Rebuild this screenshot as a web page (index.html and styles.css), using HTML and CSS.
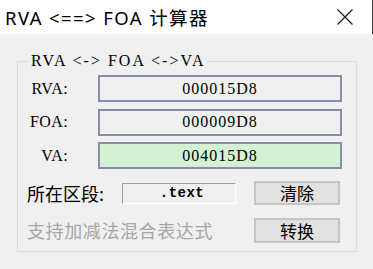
FILE: index.html
```html
<!DOCTYPE html>
<html>
<head>
<meta charset="utf-8">
<link rel="stylesheet" href="styles.css">
</head>
<body>
<div class="window">
  <div class="titlebar">
    <span class="title">RVA &lt;==&gt; FOA 计算器</span>
    <svg class="close" width="16" height="16" viewBox="0 0 16 16">
      <path d="M0.5 0.5 L15.5 15.5 M15.5 0.5 L0.5 15.5" stroke="#1a1a1a" stroke-width="1.2" fill="none"/>
    </svg>
  </div>
  <div class="content">
    <fieldset class="group">
      <legend class="legend">RVA &lt;-&gt; FOA &lt;-&gt;VA</legend>
      <div class="fields">
        <label class="lbl">RVA:</label>
        <div class="edit">000015D8</div>
        <label class="lbl">FOA:</label>
        <div class="edit">000009D8</div>
        <label class="lbl">VA:</label>
        <div class="edit edit-green">004015D8</div>
      </div>
      <div class="row row-section">
        <span class="cjk-label">所在区段:</span>
        <div class="section-box">.text</div>
        <span class="spacer"></span>
        <button class="btn">清除</button>
      </div>
      <div class="row row-hint">
        <span class="hint">支持加减法混合表达式</span>
        <span class="spacer"></span>
        <button class="btn btn-convert">转换</button>
      </div>
    </fieldset>
  </div>
</div>
</body>
</html>
```
FILE: styles.css
```css
html, body {
  margin: 0;
  padding: 0;
}
body {
  width: 373px;
  height: 269px;
  background: #f0f0f0;
  overflow: hidden;
}
.window {
  width: 373px;
  height: 269px;
  display: flex;
  flex-direction: column;
}
.titlebar {
  height: 34px;
  flex: none;
  background: #ffffff;
  display: flex;
  align-items: center;
  justify-content: space-between;
  padding-left: 5px;
  padding-right: 19px;
  box-sizing: border-box;
  border-right: 1px solid #3a3a3a;
}
.title {
  font-family: "Noto Sans", "Noto Sans CJK SC", sans-serif;
  font-size: 18.5px;
  letter-spacing: 1.4px;
  color: #000;
  margin-top: -1px;
}
.close {
  display: block;
}
.content {
  flex: 1;
  padding: 19px 16px 0 17px;
}
.group {
  margin: 0;
  padding: 0 0 8px 0;
  border: 1px solid #dcdcdc;
  height: 199px;
  box-sizing: border-box;
  display: flex;
  flex-direction: column;
}
.legend {
  margin-left: 11px;
  padding: 0 2px;
  font-family: "Liberation Serif", serif;
  font-size: 16px;
  line-height: 16px;
  letter-spacing: 2px;
  color: #000;
}
.fields {
  display: grid;
  grid-template-columns: 50px 244px;
  column-gap: 30px;
  grid-auto-rows: 27px;
  row-gap: 6.5px;
  margin-top: 6px;
  align-items: center;
}
.lbl {
  text-align: right;
  font-family: "Liberation Serif", serif;
  font-size: 16px;
  letter-spacing: 0.4px;
  color: #000;
}
.edit {
  height: 27px;
  box-sizing: border-box;
  border: 2px solid #878ca9;
  background: #f0f0f0;
  display: flex;
  align-items: center;
  justify-content: center;
  font-family: "Liberation Serif", serif;
  font-size: 16px;
  letter-spacing: 1px;
  color: #000;
}
.edit-green {
  background: #d4f1d4;
}
.row {
  display: flex;
  align-items: center;
  padding-left: 9px;
  padding-right: 16px;
}
.row-section {
  margin-top: 12px;
  height: 24px;
}
.row-hint {
  margin-top: 13px;
  height: 25px;
}
.spacer {
  flex: 1;
}
.cjk-label {
  width: 95px;
  font-family: "Noto Sans CJK SC", sans-serif;
  font-size: 18px;
  line-height: 24px;
  color: #000;
}
.section-box {
  width: 114px;
  height: 21px;
  box-sizing: border-box;
  border-top: 1px solid #a0a0a0;
  border-left: 1px solid #a0a0a0;
  border-right: 1px solid #ffffff;
  border-bottom: 1px solid #ffffff;
  background: #f0f0f0;
  display: flex;
  align-items: center;
  justify-content: center;
  font-family: "Liberation Mono", monospace;
  font-weight: bold;
  font-size: 14px;
  letter-spacing: 0.5px;
  color: #000;
  padding-left: 6px;
}
.hint {
  font-family: "Noto Sans CJK SC", sans-serif;
  font-size: 18px;
  letter-spacing: 0.6px;
  line-height: 25px;
  color: #a6a6a6;
}
.btn {
  width: 86px;
  height: 24px;
  box-sizing: border-box;
  border: 2px solid #c4c4c4;
  background: #e1e1e1;
  font-family: "Noto Sans CJK SC", sans-serif;
  font-size: 17px;
  line-height: 18px;
  color: #000;
  padding: 0;
  display: flex;
  align-items: center;
  justify-content: center;
}
.btn-convert {
  height: 25px;
}
```
